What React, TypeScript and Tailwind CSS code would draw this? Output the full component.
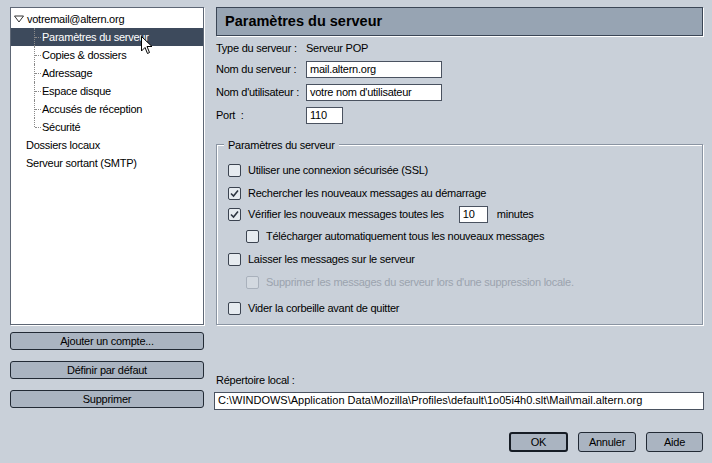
import React from 'react';

const TreeItem = ({ label, selected = false, last = false }: { label: string; selected?: boolean; last?: boolean }) => (
    <div className={`relative flex h-[18px] items-center pl-[31px] ${selected ? 'bg-[#3d4a5c] text-white' : 'text-black'}`}>
        <span className={`absolute left-[23px] top-0 w-0 border-l border-dotted border-[#8a8a8a] ${last ? 'h-[9px]' : 'h-[18px]'}`}></span>
        <span className="absolute left-[24px] top-[9px] w-[6px] border-t border-dotted border-[#8a8a8a]"></span>
        <span>{label}</span>
    </div>
);

const Checkbox = ({ checked = false, disabled = false }: { checked?: boolean; disabled?: boolean }) => (
    <span className={`flex h-[13px] w-[13px] shrink-0 items-center justify-center rounded-[2px] border ${disabled ? 'border-[#a9b1bc] bg-[#d3d9e0]' : 'border-[#3b4350] bg-[#e6ebf0]'}`}>
        {checked && (
            <svg width="9" height="9" viewBox="0 0 9 9">
                <path d="M1 4.5 L3.5 7 L8 1.5" fill="none" stroke="#2e3642" strokeWidth="1.6" />
            </svg>
        )}
    </span>
);

const CheckRow = ({ label, checked, disabled, indent, className = '' }: { label: string; checked?: boolean; disabled?: boolean; indent?: boolean; className?: string }) => (
    <div className={`flex h-[16px] items-center gap-[7px] ${indent ? 'pl-[18px]' : ''} ${className}`}>
        <Checkbox checked={checked} disabled={disabled} />
        <span className={disabled ? 'text-[#9ba3ae]' : 'text-black'}>{label}</span>
    </div>
);

const SideButton = ({ children, className = '' }: { children: React.ReactNode; className?: string }) => (
    <button className={`h-[18px] w-full rounded-[3px] border border-[#222a35] bg-[#aab4c1] text-center leading-[16px] text-black ${className}`}>
        {children}
    </button>
);

const TextField = ({ value, className = '' }: { value: string; className?: string }) => (
    <div className={`h-[17px] border border-[#4a5260] bg-white pl-[3px] leading-[15px] text-black ${className}`}>{value}</div>
);

const Cursor = () => (
    <svg className="absolute left-[141px] top-[36px]" width="12" height="19" viewBox="0 0 12 19">
        <path d="M0.5 0.5 L0.5 15 L4 11.5 L6.5 17.5 L8.5 16.5 L6 10.5 L11 10.5 Z" fill="white" stroke="black" strokeWidth="1" />
    </svg>
);

export default function App() {
    return (
        <div className="relative flex h-[463px] w-[712px] bg-[#c9d0d9] pl-[10px] pt-[7px] text-[11px] tracking-[-0.25px] font-['Liberation_Sans',Arial,sans-serif] text-black">
            {/* left column */}
            <div className="flex w-[194px] flex-col">
                <div className="h-[318px] border border-[#5e6775] bg-white pt-[2px] shadow-[1px_1px_0_#ffffff]">
                    <div className="flex h-[18px] items-center pl-[3px]">
                        <svg width="10" height="8" viewBox="0 0 10 8" className="mr-[3px]">
                            <path d="M0.5 1 L9.5 1 L5 7 Z" fill="white" stroke="#333" strokeWidth="1" />
                        </svg>
                        <span>votremail@altern.org</span>
                    </div>
                    <TreeItem label="Paramètres du serveur" selected />
                    <TreeItem label="Copies & dossiers" />
                    <TreeItem label="Adressage" />
                    <TreeItem label="Espace disque" />
                    <TreeItem label="Accusés de réception" />
                    <TreeItem label="Sécurité" last />
                    <div className="flex h-[18px] items-center pl-[15px]">Dossiers locaux</div>
                    <div className="flex h-[18px] items-center pl-[15px]">Serveur sortant (SMTP)</div>
                </div>
                <div className="mt-[7px] flex flex-col">
                    <SideButton>Ajouter un compte...</SideButton>
                    <SideButton className="mt-[11px]">Définir par défaut</SideButton>
                    <SideButton className="mt-[11px]">Supprimer</SideButton>
                </div>
            </div>

            {/* right column */}
            <div className="ml-[12px] flex w-[487px] flex-col">
                <div className="flex h-[29px] items-center border border-[#3b4656] bg-[#97a4b3] pl-[8px] text-[14.5px] font-bold tracking-normal shadow-[1px_1px_0_#ffffff]">
                    Paramètres du serveur
                </div>

                <div className="mt-[5px] flex flex-col">
                    <div className="flex h-[15px] items-center">
                        <span className="w-[90px]">Type du serveur :</span>
                        <span>Serveur POP</span>
                    </div>
                    <div className="mt-[5px] flex items-center">
                        <span className="w-[90px]">Nom du serveur :</span>
                        <TextField value="mail.altern.org" className="w-[136px]" />
                    </div>
                    <div className="mt-[6px] flex items-center">
                        <span className="w-[90px]">Nom d'utilisateur :</span>
                        <TextField value="votre nom d'utilisateur" className="w-[136px]" />
                    </div>
                    <div className="mt-[6px] flex items-center">
                        <span className="w-[90px] whitespace-pre">Port  :</span>
                        <TextField value="110" className="w-[37px]" />
                    </div>
                </div>

                <div className="relative mt-[20px] h-[181px] border border-[#8a94a2] px-[11px] pt-[17px] shadow-[1px_1px_0_#ffffff,inset_1px_1px_0_#ffffff]">
                    <span className="absolute left-[7px] top-[-8px] bg-[#c9d0d9] px-[4px]">Paramètres du serveur</span>
                    <CheckRow label="Utiliser une connexion sécurisée (SSL)" />
                    <CheckRow label="Rechercher les nouveaux messages au démarrage" checked className="mt-[7px]" />
                    <div className="mt-[5px] flex h-[17px] items-center gap-[7px]">
                        <Checkbox checked />
                        <span>Vérifier les nouveaux messages toutes les</span>
                        <TextField value="10" className="ml-[8px] w-[29px]" />
                        <span className="ml-[2px]">minutes</span>
                    </div>
                    <CheckRow label="Télécharger automatiquement tous les nouveaux messages" indent className="mt-[5px]" />
                    <CheckRow label="Laisser les messages sur le serveur" className="mt-[7px]" />
                    <CheckRow label="Supprimer les messages du serveur lors d'une suppression locale." indent disabled className="mt-[7px]" />
                    <CheckRow label="Vider la corbeille avant de quitter" className="mt-[10px]" />
                </div>

                <div className="mt-[48px] flex flex-col">
                    <span className="h-[14px] leading-[14px]">Répertoire local :</span>
                    <TextField
                        value="C:\WINDOWS\Application Data\Mozilla\Profiles\default\1o05i4h0.slt\Mail\mail.altern.org"
                        className="-ml-[2px] mt-[5px] h-[18px] w-[490px] tracking-normal"
                    />
                </div>

                <div className="mt-[22px] flex justify-end gap-[10px]">
                    <button className="h-[20px] w-[59px] rounded-[3px] border-2 border-[#161c25] bg-[#aab4c1] leading-[16px]">OK</button>
                    <button className="h-[20px] w-[58px] rounded-[3px] border border-[#222a35] bg-[#aab4c1] leading-[18px]">Annuler</button>
                    <button className="h-[20px] w-[57px] rounded-[3px] border border-[#222a35] bg-[#aab4c1] leading-[18px]">Aide</button>
                </div>
            </div>

            <Cursor />
        </div>
    );
}
